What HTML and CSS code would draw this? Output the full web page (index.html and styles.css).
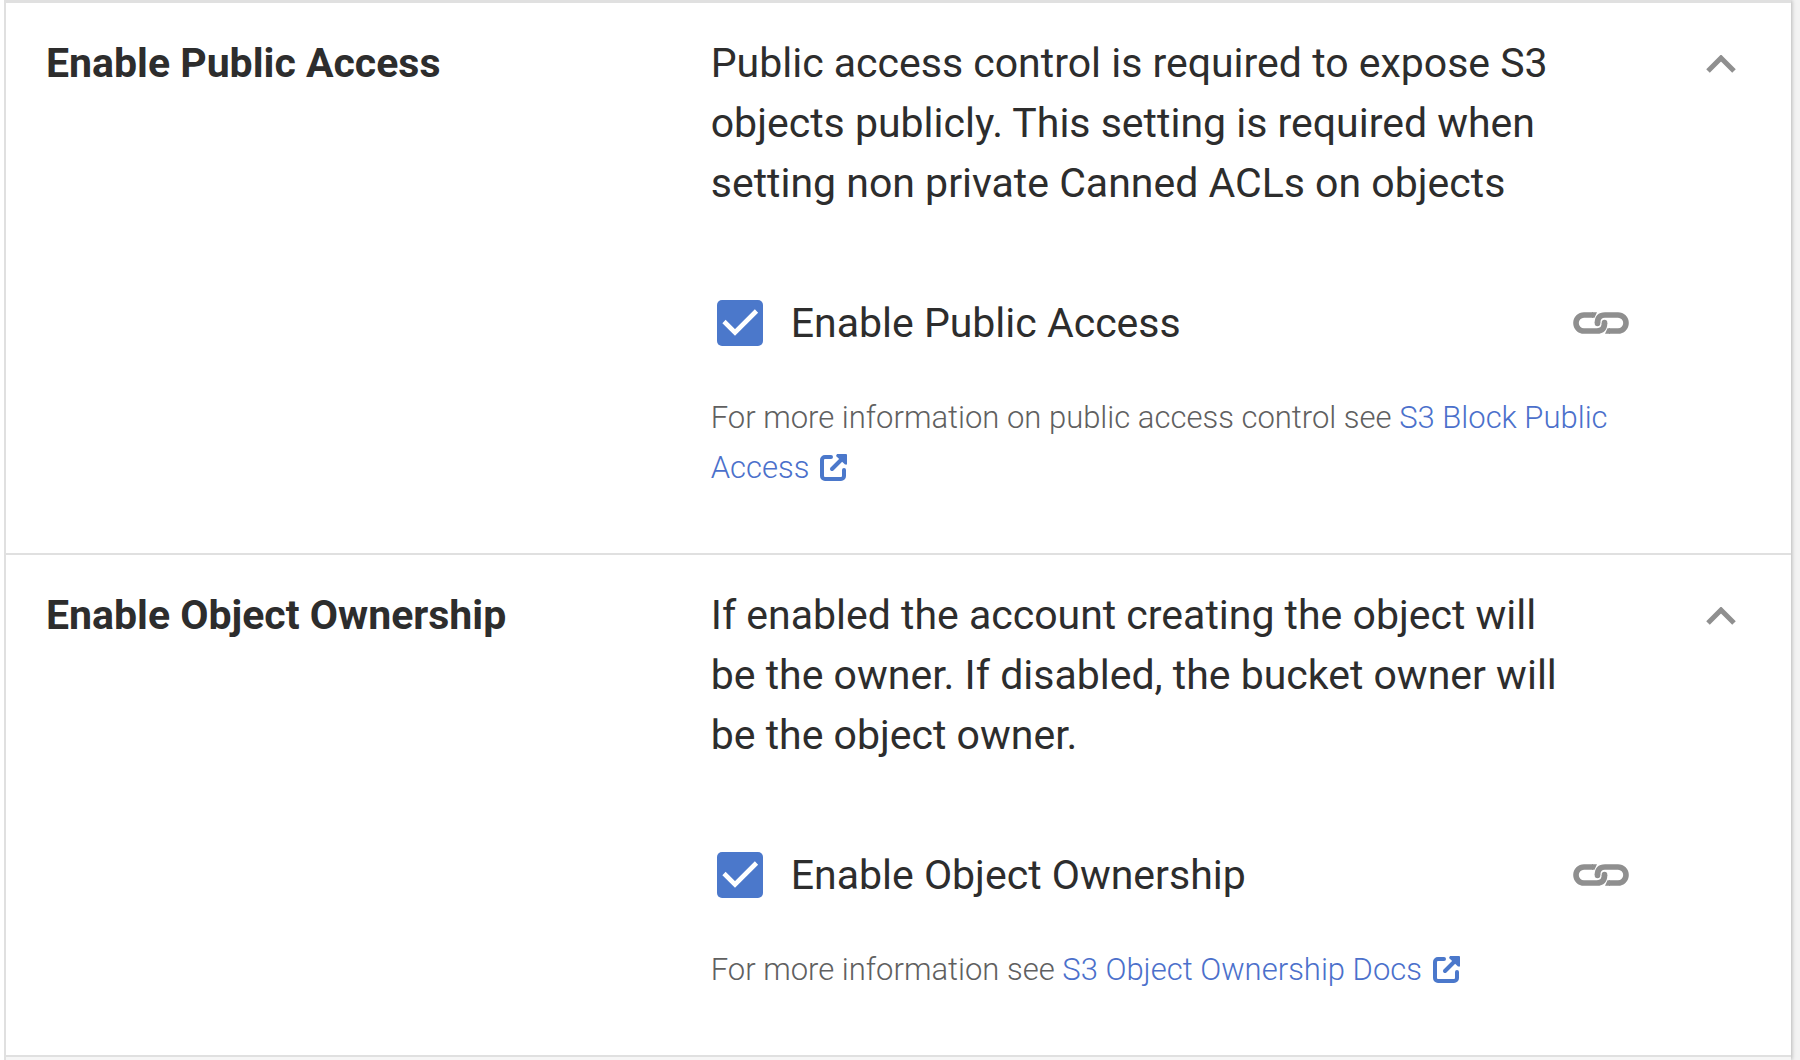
FILE: index.html
```html
<!DOCTYPE html>
<html lang="en">
<head>
<meta charset="utf-8">
<title>Bucket settings</title>
<link rel="stylesheet" href="styles.css">
</head>
<body>
<svg class="sprite" aria-hidden="true">
  <symbol id="icon-chevron" viewBox="0 0 30 18"><path d="M2 16 15 3l13 13" fill="none" stroke="currentColor" stroke-width="5"/></symbol>
  <symbol id="icon-check" viewBox="0 0 46 46"><path d="M7 21.500l11 11 21.500-21.500" fill="none" stroke="currentColor" stroke-width="4.600"/></symbol>
  <symbol id="icon-link" viewBox="0 0 56 22">
    <g fill="none" stroke="currentColor" stroke-width="5.600">
      <path d="M20 3H11a8 8 0 0 0 0 16h13q7.500 0 7.500-8"/>
      <path d="M36 19h9a8 8 0 0 0 0-16H32q-7.500 0-7.500 8"/>
      <path d="M31.500 11v-.5M24.500 11v.5" stroke-linecap="round"/>
    </g>
    <path d="M19 .200h5l-2.500 5.600H19zM37 21.800h-5l2.500-5.600H37z" fill="currentColor"/>
  </symbol>
  <symbol id="icon-external" viewBox="0 0 28 28">
    <path d="M11 4H5a3 3 0 0 0-3 3v16a3 3 0 0 0 3 3h16a3 3 0 0 0 3-3v-6" fill="none" stroke="currentColor" stroke-width="4" stroke-linecap="round"/>
    <path d="M12 16 23 5" fill="none" stroke="currentColor" stroke-width="4" stroke-linecap="round"/>
    <path d="M17 1h9a1 1 0 0 1 1 1v9.500h-2L16 3z" fill="currentColor"/>
  </symbol>
</svg>
<main class="panel">
  <section class="setting">
    <h2 class="title">Enable Public Access</h2>
    <div class="content">
      <p class="description">Public access control is required to expose S3 objects publicly. This setting is required when setting non private Canned ACLs on objects</p>
      <div class="control">
        <label class="option">
          <span class="box"><input class="tick" type="checkbox" checked><svg class="check" aria-hidden="true"><use href="#icon-check"/></svg></span>
          Enable Public Access
        </label>
        <button class="icon-button" type="button" aria-label="Copy link"><svg class="link-icon"><use href="#icon-link"/></svg></button>
      </div>
      <p class="hint">For more information on public access control see <a class="doc" href="#public">S3 Block Public Access <svg class="external"><use href="#icon-external"/></svg></a></p>
    </div>
    <button class="icon-button toggle" type="button" aria-label="Collapse"><svg class="chevron"><use href="#icon-chevron"/></svg></button>
  </section>
  <section class="setting">
    <h2 class="title">Enable Object Ownership</h2>
    <div class="content">
      <p class="description">If enabled the account creating the object will be the owner. If disabled, the bucket owner will be the object owner.</p>
      <div class="control">
        <label class="option">
          <span class="box"><input class="tick" type="checkbox" checked><svg class="check" aria-hidden="true"><use href="#icon-check"/></svg></span>
          Enable Object Ownership
        </label>
        <button class="icon-button" type="button" aria-label="Copy link"><svg class="link-icon"><use href="#icon-link"/></svg></button>
      </div>
      <p class="hint">For more information see <a class="doc" href="#ownership">S3 Object Ownership Docs <svg class="external"><use href="#icon-external"/></svg></a></p>
    </div>
    <button class="icon-button toggle" type="button" aria-label="Collapse"><svg class="chevron"><use href="#icon-chevron"/></svg></button>
  </section>
</main>
</body>
</html>
```
FILE: styles.css
```css
* { box-sizing: border-box; }
body {
  margin: 0;
  padding-right: 9px;
  border-left: 4px solid #fff;
  background: #f3f3f3;
  color: #2d2d2d;
  font: 400 41px/60px Roboto, sans-serif;
}
.sprite { display: none; }
.panel {
  min-height: 100vh;
  border-top: 3px solid #e0e0e0;
  border-left: 2px solid #e0e0e0;
  background: #f6f6f6;
  box-shadow: 1px 0 4px rgba(0, 0, 0, .25);
}
.setting {
  display: grid;
  grid-template-columns: 23fr 35fr 60px;
  column-gap: 60px;
  align-items: start;
  padding: 30px 40px 60px;
  border-bottom: 2px solid #e0e0e0;
  background: #fff;
}
.title, .description, .hint { margin: 0; }
.title { font-size: 41px; font-weight: 700; }
.description { padding-right: 60px; }
.control {
  display: flex;
  align-items: center;
  justify-content: space-between;
  margin: 80px 2px 40px 6px;
}
.option { display: flex; align-items: center; gap: 28px; }
.box { display: grid; }
.tick, .check { grid-area: 1 / 1; width: 46px; height: 46px; margin: 0; }
.tick { appearance: none; border-radius: 5px; background: #4b78cb; }
.check { color: #fff; pointer-events: none; }
.icon-button {
  display: flex;
  padding: 0;
  border: 0;
  background: none;
  color: #8f8f8f;
}
.link-icon { width: 56px; height: 22px; }
.toggle { height: 62px; align-items: center; justify-self: center; }
.chevron { width: 30px; height: 18px; }
.hint { color: #606060; font-size: 31px; font-weight: 300; line-height: 50px; }
.doc { color: #4b70cb; text-decoration: none; }
.external { width: 28px; height: 28px; margin-left: 3px; color: #4b78cb; vertical-align: -3px; }
```
